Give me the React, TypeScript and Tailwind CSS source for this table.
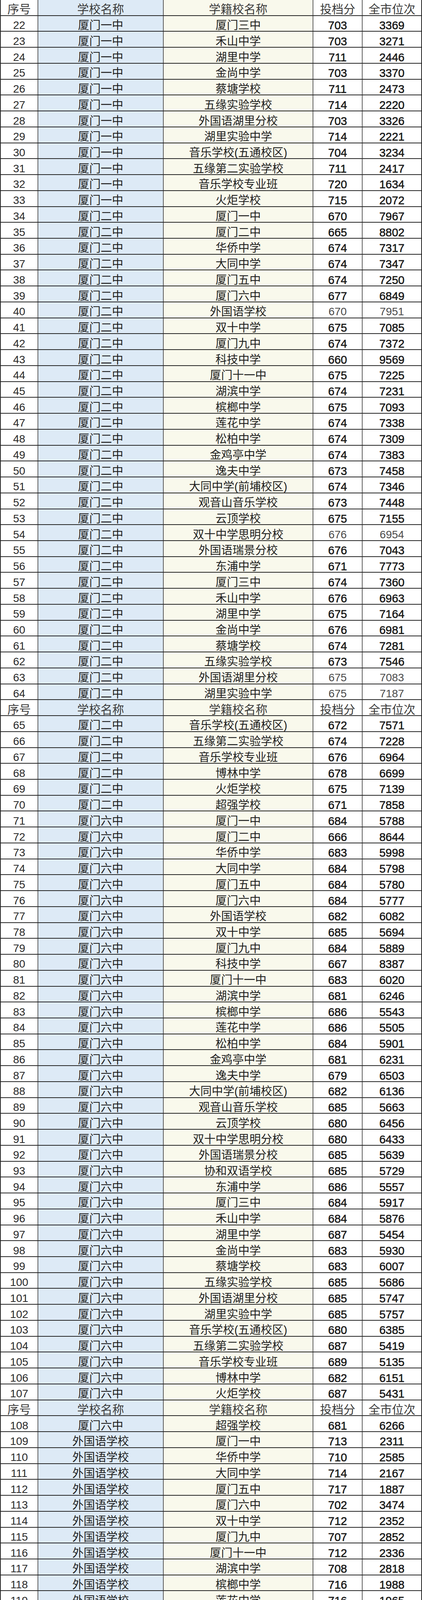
import React from "react";

type Row = [number, string, string, number, number, boolean?];

const data: Row[] = [
  [22, "厦门一中", "厦门三中", 703, 3369],
  [23, "厦门一中", "禾山中学", 703, 3271],
  [24, "厦门一中", "湖里中学", 711, 2446],
  [25, "厦门一中", "金尚中学", 703, 3370],
  [26, "厦门一中", "蔡塘学校", 711, 2473],
  [27, "厦门一中", "五缘实验学校", 714, 2220],
  [28, "厦门一中", "外国语湖里分校", 703, 3326],
  [29, "厦门一中", "湖里实验中学", 714, 2221],
  [30, "厦门一中", "音乐学校(五通校区)", 704, 3234],
  [31, "厦门一中", "五缘第二实验学校", 711, 2417],
  [32, "厦门一中", "音乐学校专业班", 720, 1634],
  [33, "厦门一中", "火炬学校", 715, 2072],
  [34, "厦门二中", "厦门一中", 670, 7967],
  [35, "厦门二中", "厦门二中", 665, 8802],
  [36, "厦门二中", "华侨中学", 674, 7317],
  [37, "厦门二中", "大同中学", 674, 7347],
  [38, "厦门二中", "厦门五中", 674, 7250],
  [39, "厦门二中", "厦门六中", 677, 6849],
  [40, "厦门二中", "外国语学校", 670, 7951, true],
  [41, "厦门二中", "双十中学", 675, 7085],
  [42, "厦门二中", "厦门九中", 674, 7372],
  [43, "厦门二中", "科技中学", 660, 9569],
  [44, "厦门二中", "厦门十一中", 675, 7225],
  [45, "厦门二中", "湖滨中学", 674, 7231],
  [46, "厦门二中", "槟榔中学", 675, 7093],
  [47, "厦门二中", "莲花中学", 674, 7338],
  [48, "厦门二中", "松柏中学", 674, 7309],
  [49, "厦门二中", "金鸡亭中学", 674, 7383],
  [50, "厦门二中", "逸夫中学", 673, 7458],
  [51, "厦门二中", "大同中学(前埔校区)", 674, 7346],
  [52, "厦门二中", "观音山音乐学校", 673, 7448],
  [53, "厦门二中", "云顶学校", 675, 7155],
  [54, "厦门二中", "双十中学思明分校", 676, 6954, true],
  [55, "厦门二中", "外国语瑞景分校", 676, 7043],
  [56, "厦门二中", "东浦中学", 671, 7773],
  [57, "厦门二中", "厦门三中", 674, 7360],
  [58, "厦门二中", "禾山中学", 676, 6963],
  [59, "厦门二中", "湖里中学", 675, 7164],
  [60, "厦门二中", "金尚中学", 676, 6981],
  [61, "厦门二中", "蔡塘学校", 674, 7281],
  [62, "厦门二中", "五缘实验学校", 673, 7546],
  [63, "厦门二中", "外国语湖里分校", 675, 7083, true],
  [64, "厦门二中", "湖里实验中学", 675, 7187, true],
  [65, "厦门二中", "音乐学校(五通校区)", 672, 7571],
  [66, "厦门二中", "五缘第二实验学校", 674, 7228],
  [67, "厦门二中", "音乐学校专业班", 676, 6964],
  [68, "厦门二中", "博林中学", 678, 6699],
  [69, "厦门二中", "火炬学校", 675, 7139],
  [70, "厦门二中", "超强学校", 671, 7858],
  [71, "厦门六中", "厦门一中", 684, 5788],
  [72, "厦门六中", "厦门二中", 666, 8644],
  [73, "厦门六中", "华侨中学", 683, 5998],
  [74, "厦门六中", "大同中学", 684, 5798],
  [75, "厦门六中", "厦门五中", 684, 5780],
  [76, "厦门六中", "厦门六中", 684, 5777],
  [77, "厦门六中", "外国语学校", 682, 6082],
  [78, "厦门六中", "双十中学", 685, 5694],
  [79, "厦门六中", "厦门九中", 684, 5889],
  [80, "厦门六中", "科技中学", 667, 8387],
  [81, "厦门六中", "厦门十一中", 683, 6020],
  [82, "厦门六中", "湖滨中学", 681, 6246],
  [83, "厦门六中", "槟榔中学", 686, 5543],
  [84, "厦门六中", "莲花中学", 686, 5505],
  [85, "厦门六中", "松柏中学", 684, 5901],
  [86, "厦门六中", "金鸡亭中学", 681, 6231],
  [87, "厦门六中", "逸夫中学", 679, 6503],
  [88, "厦门六中", "大同中学(前埔校区)", 682, 6136],
  [89, "厦门六中", "观音山音乐学校", 685, 5663],
  [90, "厦门六中", "云顶学校", 680, 6456],
  [91, "厦门六中", "双十中学思明分校", 680, 6433],
  [92, "厦门六中", "外国语瑞景分校", 685, 5639],
  [93, "厦门六中", "协和双语学校", 685, 5729],
  [94, "厦门六中", "东浦中学", 686, 5557],
  [95, "厦门六中", "厦门三中", 684, 5917],
  [96, "厦门六中", "禾山中学", 684, 5876],
  [97, "厦门六中", "湖里中学", 687, 5454],
  [98, "厦门六中", "金尚中学", 683, 5930],
  [99, "厦门六中", "蔡塘学校", 683, 6007],
  [100, "厦门六中", "五缘实验学校", 685, 5686],
  [101, "厦门六中", "外国语湖里分校", 685, 5747],
  [102, "厦门六中", "湖里实验中学", 685, 5757],
  [103, "厦门六中", "音乐学校(五通校区)", 680, 6385],
  [104, "厦门六中", "五缘第二实验学校", 687, 5419],
  [105, "厦门六中", "音乐学校专业班", 689, 5135],
  [106, "厦门六中", "博林中学", 682, 6151],
  [107, "厦门六中", "火炬学校", 687, 5431],
  [108, "厦门六中", "超强学校", 681, 6266],
  [109, "外国语学校", "厦门一中", 713, 2311],
  [110, "外国语学校", "华侨中学", 710, 2585],
  [111, "外国语学校", "大同中学", 714, 2167],
  [112, "外国语学校", "厦门五中", 717, 1887],
  [113, "外国语学校", "厦门六中", 702, 3474],
  [114, "外国语学校", "双十中学", 712, 2352],
  [115, "外国语学校", "厦门九中", 707, 2852],
  [116, "外国语学校", "厦门十一中", 712, 2336],
  [117, "外国语学校", "湖滨中学", 708, 2818],
  [118, "外国语学校", "槟榔中学", 716, 1988],
  [119, "外国语学校", "莲花中学", 716, 1965],
  [120, "外国语学校", "松柏中学", 713, 2279],
  [121, "外国语学校", "金鸡亭中学", 700, 3643],
  [122, "外国语学校", "逸夫中学", 698, 3915],
  [123, "外国语学校", "大同中学(前埔校区)", 703, 3360],
  [124, "外国语学校", "观音山音乐学校", 703, 3331],
  [125, "外国语学校", "云顶学校", 700, 3685],
  [126, "外国语学校", "双十中学思明分校", 711, 2418],
  [127, "外国语学校", "外国语瑞景分校", 699, 3763],
  [128, "外国语学校", "厦门三中", 701, 3587],
  [129, "外国语学校", "禾山中学", 701, 3585],
  [130, "外国语学校", "湖里中学", 709, 2616],
  [131, "外国语学校", "金尚中学", 701, 3589],
  [132, "外国语学校", "蔡塘学校", 710, 2534],
  [133, "外国语学校", "五缘实验学校", 714, 2129],
  [134, "外国语学校", "外国语湖里分校", 701, 3516],
  [135, "外国语学校", "湖里实验中学", 712, 2355],
  [136, "外国语学校", "音乐学校(五通校区)", 707, 2841],
  [137, "外国语学校", "五缘第二实验学校", 710, 2543],
  [138, "外国语学校", "火炬学校", 715, 2115],
  [139, "外国语学校", "华中师范大学海沧附属中学", 713, 2318],
  [140, "外国语学校", "海沧实验中学", 713, 2312],
  [141, "外国语学校", "东孚中学", 713, 2247],
  [142, "外国语学校", "厦门海沧中学", 707, 2868],
  [143, "外国语学校", "北师大海沧附属学校", 717, 1861],
  [144, "外国语学校", "外国语海沧附属学校", 717, 1893],
  [145, "外国语学校", "双十中学海沧附属学校", 715, 2065],
  [146, "外国语学校", "海沧教师进修学校附校", 708, 2715],
  [147, "外国语学校", "厦门一中海沧校区", 700, 3682],
  [148, "外国语学校", "集美中学", 715, 2058],
  [149, "外国语学校", "厦门十中", 712, 2399],
  [150, "外国语学校", "杏南中学", 705, 3133],
];

// the header line repeats before these rows
const headerBefore = new Set([22, 65, 108]);

// 132 rows share the 5376px frame through flex-1
const rowCls = "flex flex-1 basis-0 min-h-0 border-b-2 border-[#262626]";
const cell = "flex items-center justify-center border-r-2 border-[#5e5e5e] whitespace-nowrap";
const c1 = "w-[98px] shrink-0 border-l-2 border-l-[#262626] bg-white";
const c2 = "w-[321px] shrink-0 bg-[#ddeaf6]";
const c3 = "w-[383px] shrink-0 bg-[#f9f9ec]";
const c4 = "w-[126px] shrink-0 bg-white";
const c5 = "w-[152px] shrink-0 bg-white border-r-[#262626]";
const zh =
  "font-['Liberation_Sans','Noto_Sans_CJK_SC',sans-serif] text-[29px] leading-[30px] pt-[10px] text-[#1e1e1e]";
const num = "font-['Liberation_Sans',Arial,sans-serif] leading-[30px] pt-[10px]";

function Header() {
  const h =
    "font-['Liberation_Sans','Noto_Sans_CJK_SC',sans-serif] text-[30px] leading-[30px] pt-[10px] text-[#3a3a3a]";
  return (
    <div className={rowCls}>
      <div className={`${cell} ${h} ${c1}`}>序号</div>
      <div className={`${cell} ${h} ${c2}`}>学校名称</div>
      <div className={`${cell} ${h} ${c3}`}>学籍校名称</div>
      <div className={`${cell} ${h} ${c4}`}>投档分</div>
      <div className={`${cell} ${h} ${c5}`}>全市位次</div>
    </div>
  );
}

function DataRow({ r }: { r: Row }) {
  const [no, school, reg, score, rank, thin] = r;
  const scoreCls = thin
    ? "text-[28px] text-[#4a4a4a]"
    : "text-[29px] text-[#1a1a1a] [-webkit-text-stroke:0.7px_#1a1a1a]";
  return (
    <div className={rowCls}>
      <div className={`${cell} ${num} ${c1} text-[28px] text-[#2a2a2a]`}>{no}</div>
      <div className={`${cell} ${zh} ${c2}`}>{school}</div>
      <div className={`${cell} ${zh} ${c3}`}>{reg}</div>
      <div className={`${cell} ${num} ${c4} ${scoreCls}`}>{score}</div>
      <div className={`${cell} ${num} ${c5} ${scoreCls}`}>{rank}</div>
    </div>
  );
}

export default function App() {
  return (
    <div className="w-[1080px] h-[5376px] flex flex-col bg-white">
      {data.map((r) => (
        <React.Fragment key={r[0]}>
          {headerBefore.has(r[0]) && <Header />}
          <DataRow r={r} />
        </React.Fragment>
      ))}
    </div>
  );
}
